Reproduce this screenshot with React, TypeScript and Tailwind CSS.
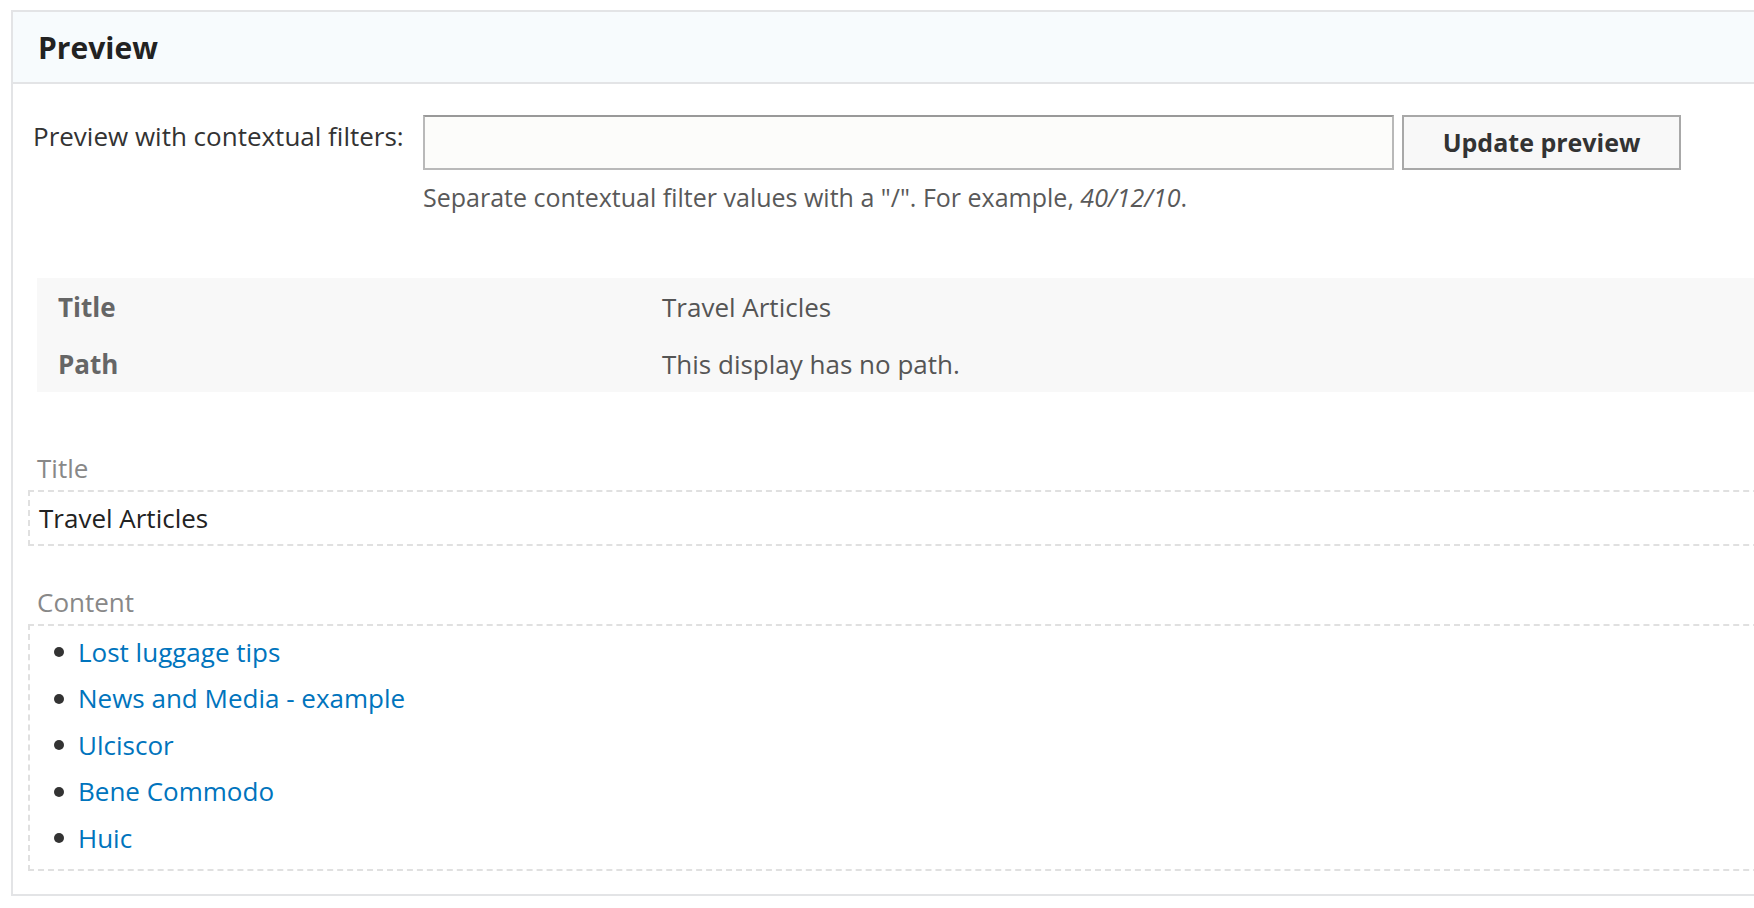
import React from "react";

const items = ["Lost luggage tips", "News and Media - example", "Ulciscor", "Bene Commodo", "Huic"];

export default function App() {
  return (
    <div className="w-[1754px] h-[908px] overflow-hidden bg-white font-['Open_Sans',sans-serif] text-[#333]">
      <div className="ml-[11px] mt-[10px] w-[1800px] h-[886px] border-2 border-[#e3e4e6]">
        <div className="h-[72px] bg-[#f7fbfd] border-b-2 border-[#e3e4e6] flex items-center pl-[25px] pt-[2px]">
          <h2 className="text-[30px] leading-[40px] font-bold text-[#222]">Preview</h2>
        </div>

        <div className="flex pl-[20px] pt-[31px]">
          <label className="w-[390px] shrink-0 text-[26px] leading-[39px] mt-[2px] text-[#333]">
            Preview with contextual filters:
          </label>
          <div className="flex flex-col">
            <div className="flex gap-[8px]">
              <input
                type="text"
                className="w-[971px] h-[55px] bg-[#fcfcfa] border-2 border-[#b9b9b9] border-t-[#999999] outline-none"
              />
              <button className="w-[279px] h-[55px] bg-[#f8f8f8] border-2 border-[#a8a8a8] text-[25px] font-bold text-[#333]">
                Update preview
              </button>
            </div>
            <div className="mt-[9px] text-[25px] leading-[36px] text-[#595959]">
              Separate contextual filter values with a "/". For example, <em>40/12/10</em>.
            </div>
          </div>
        </div>

        <div className="ml-[24px] mt-[63px] bg-[#f8f8f8] text-[26px]">
          <div className="flex h-[57px] items-center pt-[2px]">
            <div className="w-[625px] pl-[21px] font-bold text-[#666]">Title</div>
            <div className="text-[#555]">Travel Articles</div>
          </div>
          <div className="flex h-[57px] items-center pt-[2px]">
            <div className="w-[625px] pl-[21px] font-bold text-[#666]">Path</div>
            <div className="text-[#555]">This display has no path.</div>
          </div>
        </div>

        <div className="ml-[24px] mt-[57px] text-[26px] leading-[39px] text-[#888]">Title</div>
        <div className="ml-[15px] mt-[2px] border-2 border-dashed border-[#e0e0e0] pl-[9px] pt-[7px] pb-[6px] text-[26px] leading-[39px] text-[#222]">
          Travel Articles
        </div>

        <div className="ml-[24px] mt-[37px] text-[26px] leading-[39px] text-[#888]">Content</div>
        <div className="ml-[15px] mt-[2px] border-2 border-dashed border-[#e0e0e0] pt-[3px] pb-[7px]">
          <ul>
            {items.map((t) => (
              <li key={t} className="flex items-center h-[46.5px] text-[26px] leading-[39px]">
                <span className="ml-[24px] w-[10px] h-[10px] rounded-full bg-[#333] shrink-0" />
                <a href="#" className="ml-[14px] text-[#0074bd]">{t}</a>
              </li>
            ))}
          </ul>
        </div>
      </div>
    </div>
  );
}
